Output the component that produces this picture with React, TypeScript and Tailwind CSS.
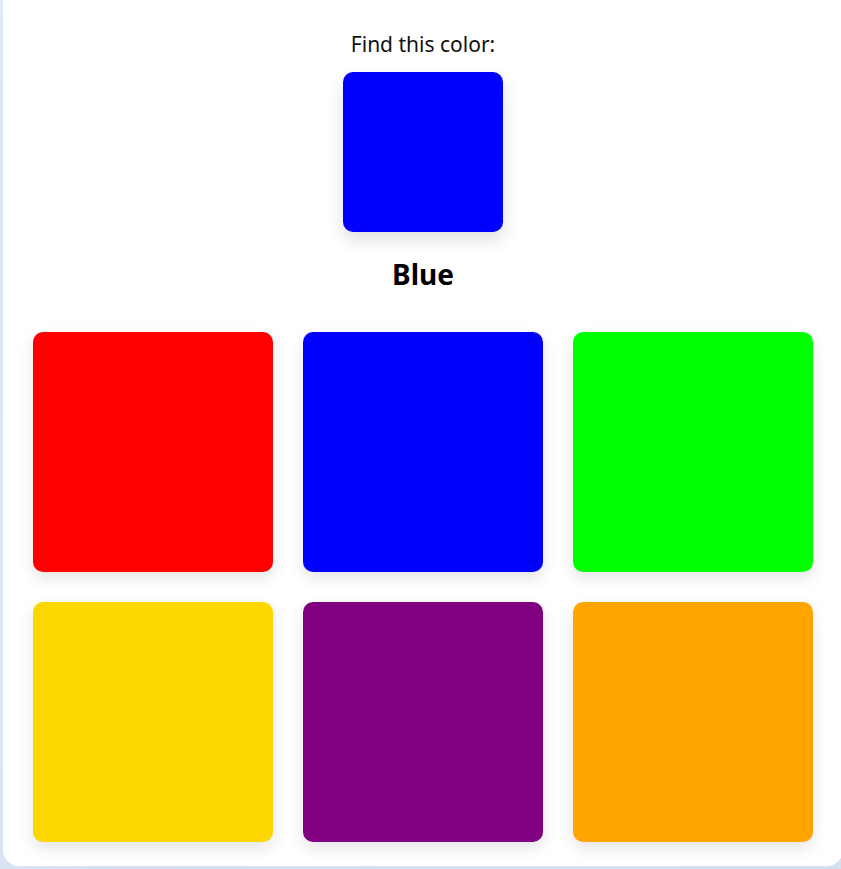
const options = [
  { name: "Red", hex: "#ff0000" },
  { name: "Blue", hex: "#0000ff" },
  { name: "Green", hex: "#00ff00" },
  { name: "Gold", hex: "#ffd700" },
  { name: "Purple", hex: "#800080" },
  { name: "Orange", hex: "#ffa500" },
];

const target = options[1];

export default function App() {
  return (
    <div
      className="min-h-screen w-full overflow-hidden bg-gradient-to-br from-[#dfe8f4] to-[#d4e0f0]"
      style={{ fontFamily: '"Segoe UI", "Noto Sans", sans-serif' }}
    >
      <div className="ml-[3px] w-[840px] h-[866px] rounded-b-2xl bg-white pl-[30px] pt-[30px]">
        <div className="flex w-[780px] flex-col items-center">
          <p className="text-[21px] leading-[28px] text-[#111]">Find this color:</p>
          <div
            className="mt-[14px] h-[160px] w-[160px] rounded-[10px] shadow-[0_8px_18px_rgba(0,0,0,0.13)]"
            style={{ backgroundColor: target.hex }}
          />
          <h2 className="mt-[25px] text-[28px] font-bold leading-[34px] text-black">{target.name}</h2>
          <div className="mt-[41px] grid w-full grid-cols-3 gap-[30px]">
            {options.map((o) => (
              <button
                key={o.name}
                aria-label={o.name}
                className="h-[240px] w-[240px] rounded-[10px] shadow-[0_6px_16px_rgba(0,0,0,0.11)]"
                style={{ backgroundColor: o.hex }}
              />
            ))}
          </div>
        </div>
      </div>
    </div>
  );
}
